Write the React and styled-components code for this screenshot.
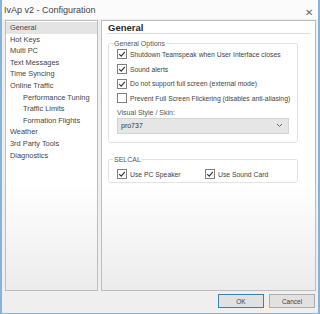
import React from 'react';
import styled, { createGlobalStyle } from 'styled-components';

const Global = createGlobalStyle`
  html, body { margin: 0; padding: 0; background: #f0f0f0; }
  body { font-family: "Liberation Sans", Arial, sans-serif; }
`;

const Window = styled.div`
  width: 320px;
  height: 314px;
  box-sizing: border-box;
  background: #efefef;
  border-left: 2px solid #86b4d8;
  border-right: 2px solid #86b4d8;
  border-bottom: 1px solid #86b4d8;
  display: flex;
  flex-direction: column;
  color: #444;
  overflow: hidden;
`;

const TitleBar = styled.div`
  height: 19px;
  background: #fbfbfb;
  display: flex;
  align-items: center;
  justify-content: space-between;
  padding: 0 5px 0 2px;
  font-size: 9px;
  color: #444;
`;

const CloseX = styled.span`
  font-size: 10px;
  color: #666;
  margin-top: 6px;
`;

const Body = styled.div`
  display: flex;
  gap: 3px;
  padding: 1px 2px 0 3px;
  height: 271px;
`;

const Tree = styled.div`
  width: 93px;
  box-sizing: border-box;
  background: linear-gradient(#fff 60%, #ececec);
  border: 1px solid #bdbdbd;
  padding-top: 1px;
`;

const TreeItem = styled.div`
  font-size: 7.4px;
  line-height: 11.6px;
  height: 11.6px;
  padding-left: ${p => (p.$child ? 17 : 4)}px;
  background: ${p => (p.$selected ? '#e4e4e4' : 'transparent')};
  color: #444;
  white-space: nowrap;
`;

const Panel = styled.div`
  flex: 1;
  box-sizing: border-box;
  background: linear-gradient(#fff 60%, #ececec);
  border: 1px solid #bdbdbd;
  padding: 0 5px;
`;

const PanelTitle = styled.div`
  font-size: 9.5px;
  line-height: 11px;
  font-weight: bold;
  color: #2a2a2a;
  padding: 1px 0 0 1px;
  border-bottom: 1px solid #dcdcdc;
  margin-bottom: 6px;
`;

const Group = styled.fieldset`
  margin: 0 12px ${p => p.$mb || 0}px 1px;
  padding: ${p => p.$pt || 0}px 6px ${p => p.$pb || 4}px 8px;
  border: 1px solid #e2e2e2;
  border-radius: 2px;
`;

const Legend = styled.legend`
  font-size: 7px;
  color: #555;
  padding: 0 1px;
  margin-left: -4px;
`;

const Row = styled.div`
  display: flex;
`;

const Check = styled.label`
  display: flex;
  align-items: center;
  gap: 3px;
  font-size: 6.8px;
  color: #444;
  height: 14.7px;
  white-space: nowrap;
  width: ${p => (p.$w ? p.$w + 'px' : 'auto')};
`;

const Box = styled.span`
  width: 8px;
  height: 8px;
  border: 1px solid #808080;
  background: #fff;
  display: inline-flex;
  align-items: center;
  justify-content: center;
`;

const Label = styled.div`
  font-size: 7px;
  color: #555;
  margin: 3px 0 2px 0;
`;

const Select = styled.div`
  height: 16px;
  margin-right: 2px;
  box-sizing: border-box;
  border: 1px solid #d4d4d4;
  background: #e6e6e6;
  display: flex;
  align-items: center;
  justify-content: space-between;
  padding: 0 5px 0 3px;
  font-size: 7px;
  color: #333;
`;

const Footer = styled.div`
  display: flex;
  justify-content: flex-end;
  gap: 5px;
  padding: 3px 3px 0 0;
`;

const Button = styled.div`
  width: 46px;
  height: 14px;
  box-sizing: border-box;
  border: 1px solid ${p => (p.$default ? '#3c7fb1' : '#adadad')};
  background: #e1e1e1;
  font-size: 6.5px;
  color: #444;
  display: flex;
  align-items: center;
  justify-content: center;
`;

const Tick = () => (
  <svg width="8" height="8" viewBox="0 0 8 8">
    <path d="M1.2 4.2 L3.2 6.2 L6.8 1.8" fill="none" stroke="#333" strokeWidth="1.1" />
  </svg>
);

const CheckBox = ({ checked, children, w }) => (
  <Check $w={w}>
    <Box>{checked && <Tick />}</Box>
    {children}
  </Check>
);

const items = [
  ['General', false, true],
  ['Hot Keys'],
  ['Multi PC'],
  ['Text Messages'],
  ['Time Syncing'],
  ['Online Traffic'],
  ['Performance Tuning', true],
  ['Traffic Limits', true],
  ['Formation Flights', true],
  ['Weather'],
  ['3rd Party Tools'],
  ['Diagnostics'],
];

export default function App() {
  return (
    <>
      <Global />
      <Window>
        <TitleBar>
          <span>IvAp v2 - Configuration</span>
          <CloseX>✕</CloseX>
        </TitleBar>
        <Body>
          <Tree>
            {items.map(([name, child, sel]) => (
              <TreeItem key={name} $child={child} $selected={sel}>{name}</TreeItem>
            ))}
          </Tree>
          <Panel>
            <PanelTitle>General</PanelTitle>
            <Group $mb={13} $pb={8}>
              <Legend>General Options</Legend>
              <CheckBox checked>Shutdown Teamspeak when User Interface closes</CheckBox>
              <CheckBox checked>Sound alerts</CheckBox>
              <CheckBox checked>Do not support full screen (external mode)</CheckBox>
              <CheckBox>Prevent Full Screen Flickering (disables anti-aliasing)</CheckBox>
              <Label>Visual Style / Skin:</Label>
              <Select>
                <span>pro737</span>
                <svg width="7" height="5" viewBox="0 0 7 5">
                  <path d="M1 1 L3.5 3.5 L6 1" fill="none" stroke="#666" strokeWidth="1" />
                </svg>
              </Select>
            </Group>
            <Group $pt={4} $pb={1}>
              <Legend>SELCAL</Legend>
              <Row>
                <CheckBox checked w={88}>Use PC Speaker</CheckBox>
                <CheckBox checked>Use Sound Card</CheckBox>
              </Row>
            </Group>
          </Panel>
        </Body>
        <Footer>
          <Button $default>OK</Button>
          <Button>Cancel</Button>
        </Footer>
      </Window>
    </>
  );
}
